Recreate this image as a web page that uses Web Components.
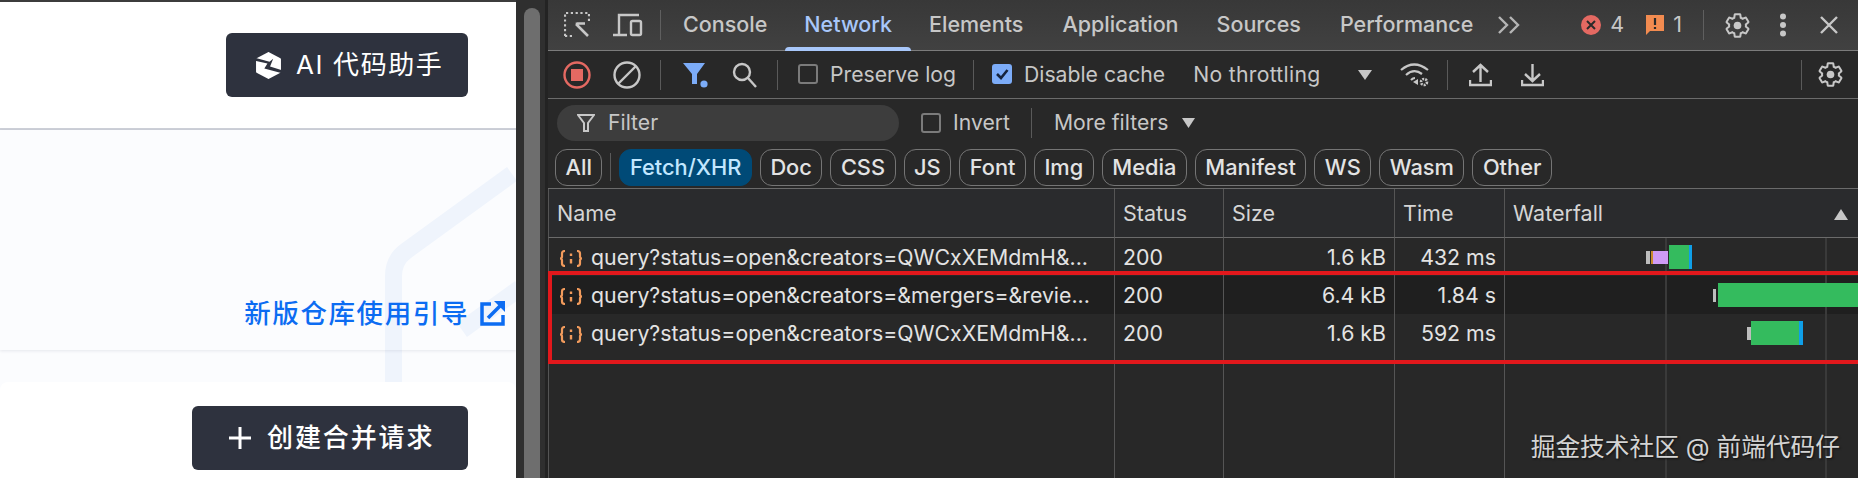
<!DOCTYPE html>
<html>
<head>
<meta charset="utf-8">
<style>
  html, body { margin: 0; height: 100%; overflow: hidden; background: #282828; }
</style>
</head>
<body>
<app-shot></app-shot>
<script>
const GEAR = `<svg viewBox="0 0 24 24" width="27" height="27" fill="none" stroke="currentColor" stroke-width="1.8"><path d="M19.43 12.98c.04-.32.07-.64.07-.98s-.03-.66-.07-.98l2.11-1.65c.19-.15.24-.42.12-.64l-2-3.46c-.12-.22-.39-.3-.61-.22l-2.49 1c-.52-.4-1.08-.73-1.69-.98l-.38-2.65C14.46 2.18 14.25 2 14 2h-4c-.25 0-.46.18-.49.42l-.38 2.65c-.61.25-1.17.59-1.69.98l-2.49-1c-.23-.09-.49 0-.61.22l-2 3.46c-.13.22-.07.49.12.64l2.11 1.65c-.04.32-.07.65-.07.98s.03.66.07.98l-2.11 1.65c-.19.15-.24.42-.12.64l2 3.46c.12.22.39.3.61.22l2.49-1c.52.4 1.08.73 1.69.98l.38 2.65c.03.24.24.42.49.42h4c.25 0 .46-.18.49-.42l.38-2.65c.61-.25 1.17-.59 1.69-.98l2.49 1c.23.09.49 0 .61-.22l2-3.46c.12-.22.07-.49-.12-.64l-2.11-1.65z"/><circle cx="12" cy="12" r="3.4" fill="currentColor" stroke="none"/></svg>`;
const UI_FONT = `Inter, "Noto Sans CJK SC", sans-serif`;

class ShadowBase extends HTMLElement {
    connectedCallback() {
        if (this.shadowRoot) return;
        this.attachShadow({ mode: 'open' });
        this.shadowRoot.innerHTML = this.render();
    }
}

class DarkButton extends ShadowBase {
    render() {
        return `<style>
        :host { display: inline-flex; align-items: center; height: 64px; background: #2e323e; color: #fff; white-space: nowrap;
            border-radius: 6px; box-sizing: border-box; font: 400 26px/1 ${UI_FONT}; letter-spacing: 1.6px; gap: 14px; }
        ::slotted(svg) { flex: none; }
        </style><slot name="icon"></slot><slot></slot>`;
    }
}

class RepoPanel extends ShadowBase {
    render() {
        return `<style>
        :host { display: flex; flex-direction: column; width: 516px; height: 478px; background: #fbfcfe; position: relative; overflow: hidden; font-family: ${UI_FONT}; border-top: 2px solid #3c3c3c; box-sizing: border-box; }
        .head { height: 128px; background: #fff; border-bottom: 2px solid #cdd0d8; display: flex; align-items: flex-start; justify-content: flex-end; padding: 31px 48px 0 0; box-sizing: border-box; flex: none; position: relative; }
        .head dark-button { padding-left: 29px; width: 242px; box-sizing: border-box; }
        .banner { height: 220px; flex: none; display: flex; align-items: flex-end; justify-content: flex-end; box-sizing: border-box; padding: 0 11px 22px 0; box-shadow: 0 1px 3px rgba(40,50,80,.10); position: relative; }
        .link { color: #0c6cf2; font-size: 26.500px; font-weight: 500; letter-spacing: 1.600px; line-height: 30px; display: flex; align-items: center; gap: 11px; position: relative; white-space: nowrap; }
        .mark { position: absolute; left: 0; top: 128px; width: 516px; height: 252px; }
        .card { margin-top: 32px; flex: 1; background: #fff; border-radius: 8px 8px 0 0; display: flex; justify-content: flex-end; padding: 24px 48px 0 0; position: relative; }
        .card dark-button { width: 276px; padding-left: 37px; box-sizing: border-box; gap: 16px; font-weight: 500; letter-spacing: 1.900px; }
        </style>
        <svg class="mark" viewBox="0 0 516 252" fill="none" stroke="#eff4fc" stroke-width="17"><path d="M393.500 252V146Q393.500 130 406 121L512 44"/><path d="M462 200L520 158"/></svg>
        <div class="head"><dark-button>
            <svg slot="icon" width="27" height="27" viewBox="0 0 26 26"><path fill="#fff" stroke="#fff" stroke-width="2" stroke-linejoin="round" d="M13 1L24 7V19L13 25L2 19V7Z"/><path fill="#2e323e" d="M0 5.500L14 9.500L17.500 6.500L14.500 14L26 17.500V20.500L9 16L12 11L0 8.500Z"/></svg>
            AI 代码助手</dark-button></div>
        <div class="banner"><span class="link">新版仓库使用引导
            <svg width="25" height="25" viewBox="0 0 25 25" fill="none" stroke="#0c6cf2" stroke-width="3.500"><path d="M11 3H2V23H23V14"/><path d="M8 17L21 4"/><path fill="#0c6cf2" stroke="none" d="M14 0H25V11Z"/></svg></span></div>
        <div class="card"><dark-button>
            <svg slot="icon" width="22" height="22" viewBox="0 0 22 22" fill="none" stroke="#fff" stroke-width="3"><path d="M11 0V22M0 11H22"/></svg>
            创建合并请求</dark-button></div>`;
    }
}

class PageScrollbar extends ShadowBase {
    render() {
        return `<style>
        :host { display: block; width: 32px; height: 478px; background: #2f2f2f; box-sizing: border-box; padding: 8px 8px 0; position: relative; border-right: 3px solid #232323; }
        .thumb { width: 16px; height: 100%; background: #6e6e6e; border-radius: 8px 8px 0 0; }
        </style><div class="thumb"></div>`;
    }
}

class DevtoolsTabs extends ShadowBase {
    render() {
        return `<style>
        :host { display: flex; align-items: center; height: 50px; flex: none; background: linear-gradient(#383838, #414141); border-bottom: 1px solid #7c7c7c; color: #c7c7c7; font: 500 21.500px/1 ${UI_FONT}; position: relative; }
        svg { flex: none; display: block; }
        .sep { width: 1px; height: 30px; background: #5f5f5f; flex: none; }
        .tab { flex: none; }
        .on { color: #a8c7fa; position: relative; }
        .on::after { content: ""; position: absolute; left: -19px; right: -19px; bottom: -15px; height: 4px; background: #a8c7fa; border-radius: 4px 4px 0 0; }
        .n { font-weight: 400; flex: none; }
        </style>
        <svg style="margin-left:16px" width="26" height="26" viewBox="0 0 26 26" fill="none" stroke="#c7c7c7" stroke-width="2.200"><path stroke-dasharray="2.200 2.600" d="M1 24V1H25V9"/><path stroke-dasharray="2.200 2.600" d="M1 24H8"/><path stroke-width="2.600" d="M13 13V10.500M13 11.500H21M12 12L24 24"/></svg>
        <svg style="margin-left:23px" width="30" height="24" viewBox="0 0 30 24" fill="none" stroke="#c7c7c7" stroke-width="2.400"><path d="M6 21V2H26M0 22H14"/><rect x="18" y="8" width="10" height="14" rx="1.500"/></svg>
        <span class="sep" style="margin-left:17px"></span>
        <span class="tab" style="margin-left:22px">Console</span>
        <span class="tab on" style="margin-left:37px">Network</span>
        <span class="tab" style="margin-left:37px">Elements</span>
        <span class="tab" style="margin-left:39px">Application</span>
        <span class="tab" style="margin-left:38px">Sources</span>
        <span class="tab" style="margin-left:39px">Performance</span>
        <svg style="margin-left:25px" width="23" height="18" viewBox="0 0 23 18" fill="none" stroke="#b5b5b5" stroke-width="2.400"><path d="M1 1L9 9L1 17M12 1L20 9L12 17"/></svg>
        <svg style="margin-left:60px" width="20" height="20" viewBox="0 0 20 20"><circle cx="10" cy="10" r="10" fill="#e46962"/><path d="M6 6L14 14M14 6L6 14" stroke="#2a2a2a" stroke-width="2"/></svg>
        <span class="n" style="margin-left:9px">4</span>
        <svg style="margin-left:21px" width="20" height="20" viewBox="0 0 20 20"><path fill="#f28b50" d="M1 0H19V16H5L1 20Z"/><path d="M10 3V10M10 12V14" stroke="#2a2a2a" stroke-width="2.200"/></svg>
        <span class="n" style="margin-left:8px">1</span>
        <span class="sep" style="margin-left:21px"></span>
        <span style="margin-left:20px;display:flex">${GEAR}</span>
        <svg style="margin-left:28px" width="8" height="24" viewBox="0 0 8 24" fill="#c7c7c7"><circle cx="4" cy="3.500" r="3"/><circle cx="4" cy="12" r="3"/><circle cx="4" cy="20.500" r="3"/></svg>
        <svg style="margin-left:33px" width="18" height="18" viewBox="0 0 18 18" stroke="#c7c7c7" stroke-width="2.400"><path d="M1 1L17 17M17 1L1 17"/></svg>`;
    }
}

class DtCheck extends ShadowBase {
    render() {
        const on = this.hasAttribute('checked');
        return `<style>
        :host { display: inline-flex; align-items: center; gap: 12px; flex: none; }
        .box { width: 20px; height: 20px; box-sizing: border-box; border-radius: 3px; border: ${on ? '0' : '2px solid #7b7b7b'}; background: ${on ? '#7cacf8' : 'transparent'}; display: flex; }
        </style><span class="box">${on ? '<svg viewBox="0 0 20 20" width="20" height="20" fill="none" stroke="#15233d" stroke-width="2.600"><path d="M5 10L9 14L15.500 6"/></svg>' : ''}</span><slot></slot>`;
    }
}

class NetToolbar extends ShadowBase {
    render() {
        return `<style>
        :host { display: flex; align-items: center; height: 47px; flex: none; background: #282828; border-bottom: 1px solid #6b6b6b; color: #c7c7c7; font: 400 21.200px/1 ${UI_FONT}; }
        svg { flex: none; display: block; }
        .sep { width: 1px; height: 30px; background: #5a5a5a; flex: none; }
        .t { flex: none; }
        </style>
        <svg style="margin-left:15px" width="28" height="28" viewBox="0 0 28 28"><circle cx="14" cy="14" r="12.500" fill="none" stroke="#e46962" stroke-width="2.400"/><rect x="8" y="8" width="12" height="12" fill="#e46962"/></svg>
        <svg style="margin-left:22px" width="28" height="28" viewBox="0 0 28 28" fill="none" stroke="#c7c7c7" stroke-width="2.400"><circle cx="14" cy="14" r="12.500"/><path d="M23 5L5 23"/></svg>
        <span class="sep" style="margin-left:19px"></span>
        <svg style="margin-left:22px" width="26" height="26" viewBox="0 0 26 26" fill="#7cacf8"><path d="M0 1H22L14 12V22H9V12Z"/><circle cx="21" cy="22" r="3.600"/></svg>
        <svg style="margin-left:23px" width="25" height="26" viewBox="0 0 25 26" fill="none" stroke="#c7c7c7" stroke-width="2.400"><circle cx="10" cy="10" r="8"/><path d="M16 16L24 25"/></svg>
        <span class="sep" style="margin-left:20px"></span>
        <dt-check style="margin-left:20px">Preserve log</dt-check>
        <span class="sep" style="margin-left:17px"></span>
        <dt-check checked style="margin-left:18px">Disable cache</dt-check>
        <span class="t" style="margin-left:28px;letter-spacing:.3px">No throttling</span>
        <svg style="margin-left:37px" width="14" height="10" viewBox="0 0 14 10" fill="#c7c7c7"><path d="M0 0H14L7 10Z"/></svg>
        <svg style="margin-left:28px" width="30" height="26" viewBox="0 0 30 26" fill="none" stroke="#c7c7c7" stroke-width="2.200"><path d="M1 8Q14 -3 28 8M6 13Q14 6 22 12M11 18Q13 16 15 16"/><path fill="#c7c7c7" stroke="none" d="M13 20L18 17V23Z"/><circle cx="24" cy="20" r="3" stroke-width="2.600" stroke-dasharray="2 1"/></svg>
        <span class="sep" style="margin-left:17px"></span>
        <svg style="margin-left:21px" width="23" height="24" viewBox="0 0 23 24" fill="none" stroke="#c7c7c7" stroke-width="2.400"><path d="M1 17V22H22V17M11.500 19V2M4 9L11.500 2L19 9"/></svg>
        <svg style="margin-left:29px" width="23" height="24" viewBox="0 0 23 24" fill="none" stroke="#c7c7c7" stroke-width="2.400"><path d="M1 17V22H22V17M11.500 1V18M4 11L11.500 18L19 11"/></svg>
        <span class="sep" style="margin-left:257px"></span>
        <span style="margin-left:15px;display:flex">${GEAR}</span>`;
    }
}

class FilterRow extends ShadowBase {
    render() {
        return `<style>
        :host { display: flex; align-items: center; height: 48px; flex: none; background: #282828; color: #c7c7c7; font: 400 21.200px/1 ${UI_FONT}; }
        svg { flex: none; display: block; }
        .pill { margin-left: 9px; width: 342px; height: 36px; border-radius: 18px; background: #3d3d3d; display: flex; align-items: center; box-sizing: border-box; padding-left: 20px; gap: 13px; flex: none; }
        .sep { width: 1px; height: 30px; background: #5a5a5a; flex: none; }
        </style>
        <div class="pill"><svg width="18" height="18" viewBox="0 0 18 18" fill="none" stroke="#c7c7c7" stroke-width="2"><path d="M1 1H17L11 9V17H7V9Z"/></svg>Filter</div>
        <dt-check style="margin-left:22px">Invert</dt-check>
        <span class="sep" style="margin-left:21px"></span>
        <span style="margin-left:22px;flex:none">More filters</span>
        <svg style="margin-left:14px" width="13" height="10" viewBox="0 0 13 10" fill="#c7c7c7"><path d="M0 0H13L6.500 10Z"/></svg>`;
    }
}

class TypeChips extends ShadowBase {
    render() {
        const chips = ['Doc', 'CSS', 'JS', 'Font', 'Img', 'Media', 'Manifest', 'WS', 'Wasm', 'Other'];
        return `<style>
        :host { display: flex; align-items: flex-start; height: 42px; flex: none; background: #282828; border-bottom: 1px solid #6b6b6b; padding: 2px 0 0 7px; box-sizing: border-box; color: #e3e3e3; font: 500 21.800px/1 ${UI_FONT}; gap: 8px; }
        .c { height: 37px; box-sizing: border-box; border: 1px solid #757575; border-radius: 12px; padding: 0 9.500px; display: flex; align-items: center; flex: none; }
        .on { background: #004a77; border-color: #004a77; color: #c2e7ff; padding: 0 9.500px; }
        .sep { width: 1px; height: 28px; margin-top: 4px; background: #5a5a5a; flex: none; }
        </style>
        <span class="c">All</span><span class="sep"></span><span class="c on">Fetch/XHR</span>
        ${chips.map(c => `<span class="c">${c}</span>`).join('')}`;
    }
}

class RequestTable extends ShadowBase {
    render() {
        const rows = [
            { url: 'query?status=open&creators=QWCxXEMdmH&...', size: '1.6 kB', time: '432 ms', cls: '', bar: `
                <i style="margin-left:141px;width:4px;height:13px;background:#bdbdbd"></i>
                <i style="margin-left:1px;width:2px;height:13px;background:#c98a2c"></i>
                <i style="width:15px;height:13px;background:#cf9bf5"></i>
                <i style="margin-left:1px;width:20px;height:24px;background:#34bb5e"></i>
                <i style="width:3px;height:24px;background:#0f9fe8"></i>` },
            { url: 'query?status=open&creators=&mergers=&revie...', size: '6.4 kB', time: '1.84 s', cls: 'dark', bar: `
                <i style="margin-left:208px;width:3px;height:13px;background:#bdbdbd"></i>
                <i style="margin-left:2px;flex:1;height:24px;background:#34bb5e"></i>` },
            { url: 'query?status=open&creators=QWCxXEMdmH&...', size: '1.6 kB', time: '592 ms', cls: '', bar: `
                <i style="margin-left:242px;width:4px;height:13px;background:#bdbdbd"></i>
                <i style="width:48px;height:24px;background:#34bb5e"></i>
                <i style="width:4px;height:24px;background:#0f9fe8"></i>` }
        ];
        const icon = `<svg width="24" height="17" viewBox="0 0 24 17" fill="none" stroke="#f29b5c" stroke-width="2.200"><path d="M6 1Q3 1 3 3.500V6.500Q3 8.500 1 8.500Q3 8.500 3 10.500V13.500Q3 16 6 16M18 1Q21 1 21 3.500V6.500Q21 8.500 23 8.500Q21 8.500 21 10.500V13.500Q21 16 18 16"/><path d="M12 3.500V6M12 9V13.500" stroke-width="2.400"/></svg>`;
        return `<style>
        :host { display: grid; flex: 1; min-height: 0; grid-template-columns: 566px 109px 171px 110px 1fr; grid-template-rows: 49px 38px 38px 38px 1fr; background: #282828; color: #e3e3e3; font: 400 21.300px/1 ${UI_FONT}; position: relative; overflow: hidden; }
        .cell { display: flex; align-items: center; box-sizing: border-box; padding: 2px 8px 0; border-left: 1px solid #555; white-space: nowrap; overflow: hidden; min-width: 0; }
        .h { background: #2a2b2d; border-bottom: 1px solid #6b6b6b; color: #d5d5d5; font-size: 21.500px; }
        .r { justify-content: flex-end; }
        .dark { background: #1f1f1f; }
        .name { gap: 8px; padding-left: 10px; }
        .wf { padding: 0; background-image: linear-gradient(#3a3a3a, #3a3a3a), linear-gradient(#3a3a3a, #3a3a3a); background-size: 2px 100%, 2px 100%; background-position: 160px 0, 320px 0; background-repeat: no-repeat; }
        .h.wf, .cell.h { padding-top: 2px; }
        .wf i { display: block; flex: none; }
        .box { position: absolute; left: 0; right: -10px; top: 82px; height: 93px; border: 4px solid #e2181c; box-sizing: border-box; pointer-events: none; }
        </style>
        <div class="cell h">Name</div>
        <div class="cell h">Status</div>
        <div class="cell h">Size</div>
        <div class="cell h">Time</div>
        <div class="cell h" style="justify-content:space-between;padding-right:10px">Waterfall<svg width="14" height="11" viewBox="0 0 14 11" fill="#c7c7c7"><path d="M0 11H14L7 0Z"/></svg></div>
        ${rows.map(r => `
            <div class="cell name ${r.cls}">${icon}<span>${r.url}</span></div>
            <div class="cell ${r.cls}">200</div>
            <div class="cell r ${r.cls}">${r.size}</div>
            <div class="cell r ${r.cls}">${r.time}</div>
            <div class="cell wf ${r.cls}">${r.bar}</div>`).join('')}
        <div class="cell"></div><div class="cell"></div><div class="cell"></div><div class="cell"></div><div class="cell wf"></div>
        <div class="box"></div>`;
    }
}

class DevtoolsPanel extends ShadowBase {
    render() {
        return `<style>
        :host { display: flex; flex-direction: column; flex: 1; min-width: 0; height: 478px; background: #282828; position: relative; overflow: hidden; }
        .mark { position: absolute; right: 18px; top: 432px; color: #d4d4d4; font: 400 24.700px/30px ${UI_FONT}; text-shadow: 1px 1px 2px #111; white-space: nowrap; }
        </style>
        <devtools-tabs></devtools-tabs>
        <net-toolbar></net-toolbar>
        <filter-row></filter-row>
        <type-chips></type-chips>
        <request-table></request-table>
        <div class="mark">掘金技术社区 @ 前端代码仔</div>`;
    }
}

class AppShot extends ShadowBase {
    render() {
        return `<style>
        :host { display: flex; width: 1858px; height: 478px; overflow: hidden; }
        repo-panel, page-scrollbar { flex: none; }
        </style>
        <repo-panel></repo-panel><page-scrollbar></page-scrollbar><devtools-panel></devtools-panel>`;
    }
}

customElements.define('dark-button', DarkButton);
customElements.define('repo-panel', RepoPanel);
customElements.define('page-scrollbar', PageScrollbar);
customElements.define('devtools-tabs', DevtoolsTabs);
customElements.define('dt-check', DtCheck);
customElements.define('net-toolbar', NetToolbar);
customElements.define('filter-row', FilterRow);
customElements.define('type-chips', TypeChips);
customElements.define('request-table', RequestTable);
customElements.define('devtools-panel', DevtoolsPanel);
customElements.define('app-shot', AppShot);
</script>
</body>
</html>
